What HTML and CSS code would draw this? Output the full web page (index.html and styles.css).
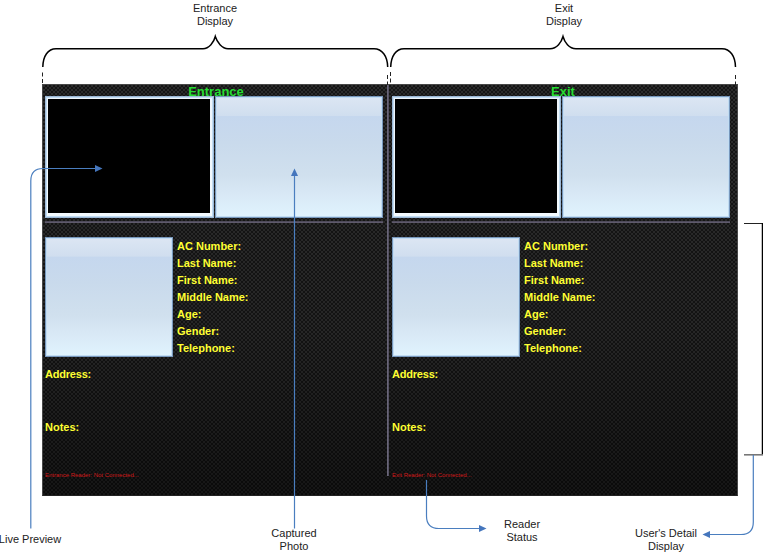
FILE: index.html
```html
<!DOCTYPE html>
<html lang="en">
<head>
<meta charset="utf-8">
<title>Entrance and Exit Display</title>
<link rel="stylesheet" href="styles.css">
</head>
<body>
<main class="diagram">
  <section class="monitor">
    <article class="pane">
      <h2 class="title">Entrance</h2>
      <div class="screens">
        <div class="glass live"></div>
        <div class="glass"></div>
      </div>
      <hr class="rule">
      <div class="person">
        <div class="glass photo"></div>
        <ul class="fields">
          <li>AC Number:</li><li>Last Name:</li><li>First Name:</li><li>Middle Name:</li><li>Age:</li><li>Gender:</li><li>Telephone:</li>
        </ul>
      </div>
      <p class="address">Address:</p>
      <p class="notes">Notes:</p>
      <p class="status">Entrance Reader: Not Connected...</p>
    </article>
    <div class="divider"></div>
    <article class="pane">
      <h2 class="title">Exit</h2>
      <div class="screens">
        <div class="glass live"></div>
        <div class="glass"></div>
      </div>
      <hr class="rule">
      <div class="person">
        <div class="glass photo"></div>
        <ul class="fields">
          <li>AC Number:</li><li>Last Name:</li><li>First Name:</li><li>Middle Name:</li><li>Age:</li><li>Gender:</li><li>Telephone:</li>
        </ul>
      </div>
      <p class="address">Address:</p>
      <p class="notes">Notes:</p>
      <p class="status">Exit Reader: Not Connected...</p>
    </article>
  </section>

  <svg class="callouts" width="763" height="554" viewBox="0 0 763 554" fill="none">
    <g stroke="#000" stroke-width="1.5">
      <path d="M42.8 67C43 56 48 48.7 56 48.7H203C209 48.7 214 42 215.3 36.5C217 42 222 48.7 228 48.7H374C382 48.7 387.5 56 387.7 67"/>
      <path d="M390.7 67C391 56 396 48.7 404 48.7H550C557 48.7 561.5 42 563 36.5C564.5 42 569 48.7 576 48.7H722C730 48.7 735.3 56 735.5 67"/>
    </g>
    <g stroke="#222" stroke-width="1">
      <path d="M42.5 72.5V84M390.5 72V83" stroke-dasharray="4 2.5"/>
      <path d="M387.5 75V85M735.5 75V85" stroke-dasharray="4 2.5"/>
      <path d="M744 223.5H763"/>
    </g>
    <path d="M762.5 223V455" stroke="#000" stroke-width="1.5"/>
    <path d="M744 454.8H763" stroke="#777" stroke-width="1.6"/>
    <g stroke="#4a7ebf" stroke-width="1.2">
      <path d="M30.8 528.5V181Q30.8 168.5 43 168.5H96"/>
      <path d="M294.5 528.5V175"/>
      <path d="M426.5 480V516Q426.5 528.5 439 528.5H480"/>
      <path d="M753.3 455V522Q753.3 534.5 741 534.5H709"/>
    </g>
    <g fill="#4576bd">
      <path d="M95 165L102.5 168.5L95 172Z"/>
      <path d="M291 176L294.5 168.5L298 176Z"/>
      <path d="M479 525L486.5 528.5L479 532Z"/>
      <path d="M710 531L702.5 534.5L710 538Z"/>
    </g>
  </svg>
  <p class="label entrance">Entrance<br>Display</p>
  <p class="label exit">Exit<br>Display</p>
  <p class="label preview">Live Preview</p>
  <p class="label captured">Captured<br>Photo</p>
  <p class="label reader">Reader<br>Status</p>
  <p class="label detail">User's Detail<br>Display</p>
</main>
</body>
</html>
```

FILE: styles.css
```css
* { box-sizing: border-box; }
body {
  margin: 0;
  background: #fff;
  font-family: "Liberation Sans", Arial, sans-serif;
  overflow: hidden;
}
p, h2, ul { margin: 0; padding: 0; list-style: none; }

.diagram {
  position: relative;
  width: 763px;
  height: 554px;
  padding: 84px 0 0 42px;
}
.monitor {
  display: flex;
  width: 696px;
  height: 412px;
  padding: 0 2px;
  border: 1px solid #484848;
  border-bottom-color: #222;
  background:
    linear-gradient(rgba(0, 0, 0, 0), rgba(0, 0, 0, .12) 60%, rgba(0, 0, 0, .5)),
    radial-gradient(circle at 1px 1px, #353535 .5px, transparent 1.2px) 0 0 / 4px 4px,
    radial-gradient(circle at 1px 1px, #353535 .5px, transparent 1.2px) 2px 2px / 4px 4px,
    #151515;
}
.pane { width: 338px; }
.divider {
  width: 2px;
  height: 391px;
  margin: 0 3px 0 4px;
  background: linear-gradient(90deg, #726f82, #4b4859);
}
.title {
  height: 11px;
  padding-left: 4px;
  color: #26dc32;
  font-size: 13px;
  line-height: 13px;
  text-align: center;
}
.screens { display: flex; gap: 1px; height: 122px; }
.glass {
  flex: 1;
  border: 1px solid #7797bc;
  box-shadow: inset 0 0 0 1px #c1dcf2;
  background: linear-gradient(#dce6f3, #d0deef 15.5%, #c5d7ee 16%, #c9daec 38%, #d0e0ee 65%, #d8e8f5 80%, #e0f3fe);
}
.live {
  flex: 0 0 168.5px;
  border-color: #9db9d7;
  background: linear-gradient(#000, #000) 2px 2px / 162px 114px no-repeat, linear-gradient(#edf4fb, #f4fbff);
}
.rule {
  height: 2px;
  margin: 3px 0 0;
  border: 0;
  background: linear-gradient(#454251, #686376);
}
.person { display: flex; gap: 4px; padding-top: 14px; }
.photo { flex: none; width: 128px; height: 120px; }
.fields, .address, .notes {
  color: #ffff32;
  font-size: 11px;
  font-weight: bold;
  line-height: 17px;
}
.fields { padding-top: 1px; white-space: nowrap; }
.address { margin-top: 9px; letter-spacing: -.2px; }
.notes { margin-top: 36px; }
.status {
  margin-top: 35px;
  color: #cf1919;
  font-size: 6px;
  line-height: 8px;
}
.callouts { position: absolute; inset: 0; }

/* Captions pinned to the ends of the callout lines. */
.label {
  position: absolute;
  transform: translateX(-50%);
  color: #222;
  font-size: 11px;
  line-height: 13px;
  text-align: center;
  white-space: nowrap;
}
.entrance { left: 215px; top: 2px; }
.exit { left: 564px; top: 2px; }
.preview { left: 30px; top: 533px; }
.captured { left: 294px; top: 527px; }
.reader { left: 522px; top: 518px; }
.detail { left: 666px; top: 527px; }
```
